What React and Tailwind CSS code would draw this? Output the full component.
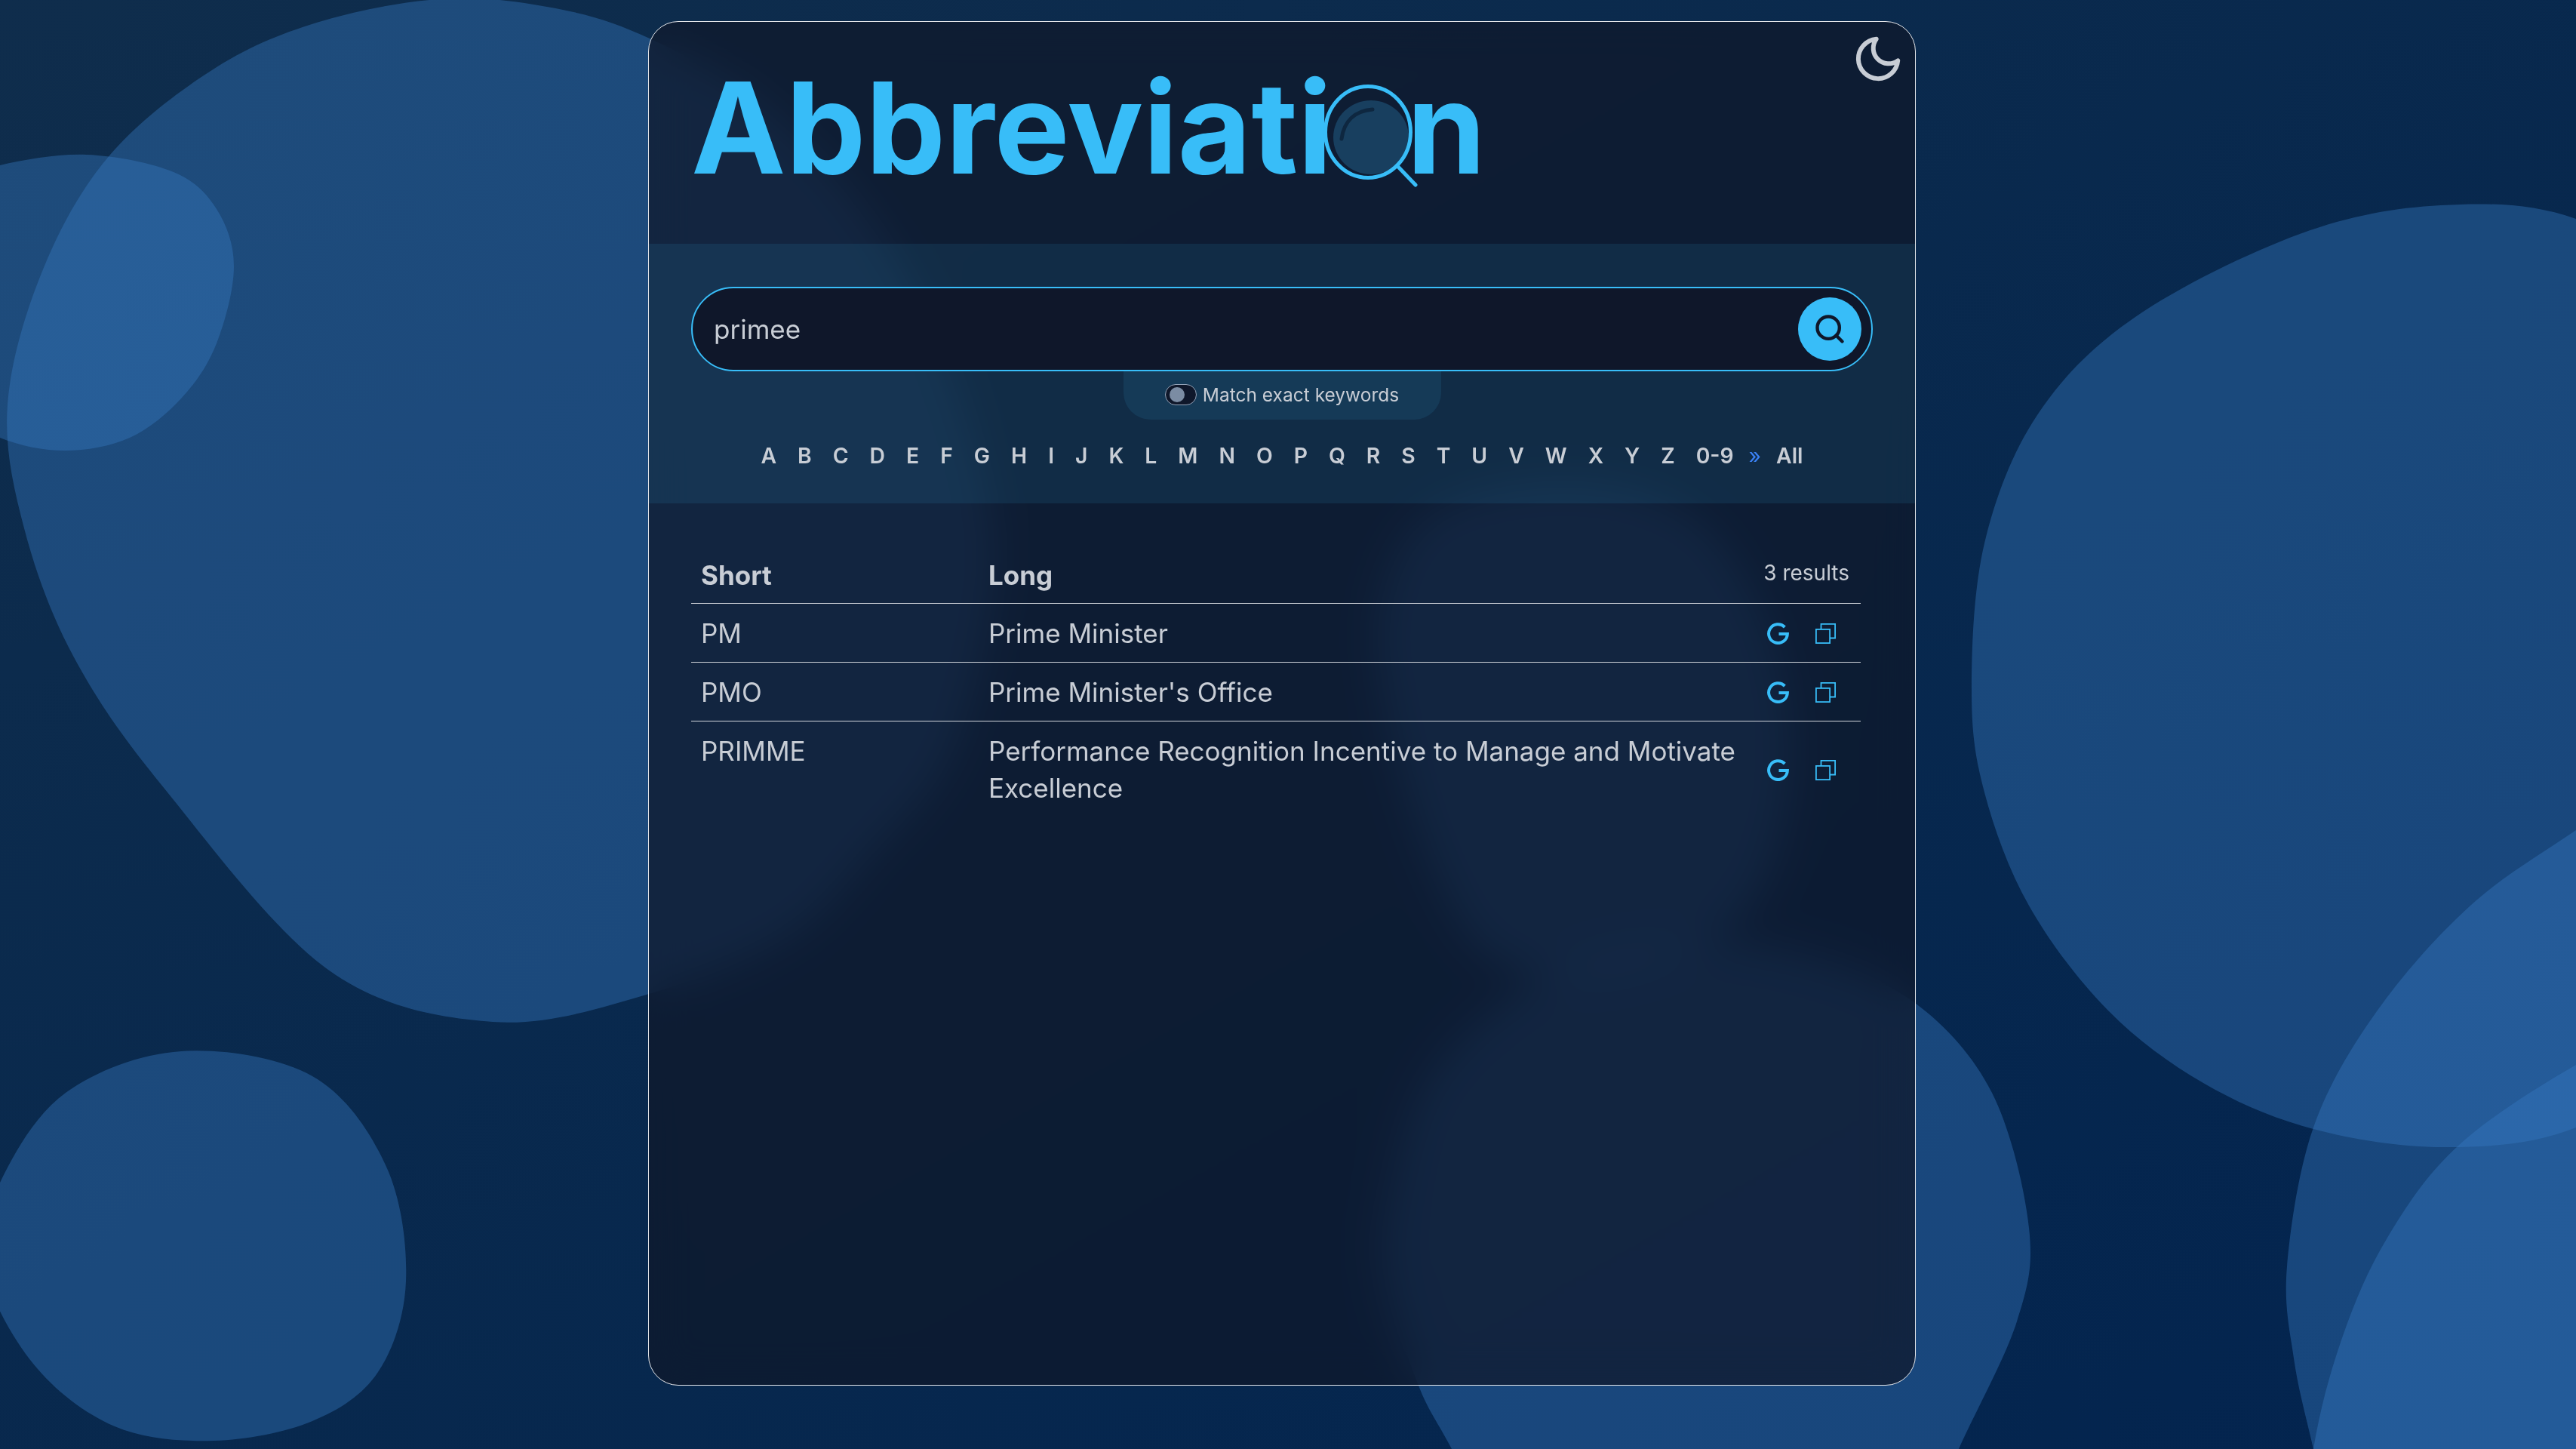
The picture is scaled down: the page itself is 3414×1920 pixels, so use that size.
import { Search } from 'lucide-react';

// smooth closed outline through the given points (Catmull-Rom to bezier)
function blobPath(pts) {
  const n = pts.length;
  let d = `M${pts[0][0]} ${pts[0][1]}`;
  for (let i = 0; i < n; i++) {
    const p0 = pts[(i - 1 + n) % n];
    const p1 = pts[i];
    const p2 = pts[(i + 1) % n];
    const p3 = pts[(i + 2) % n];
    const c1x = p1[0] + (p2[0] - p0[0]) / 6;
    const c1y = p1[1] + (p2[1] - p0[1]) / 6;
    const c2x = p2[0] - (p3[0] - p1[0]) / 6;
    const c2y = p2[1] - (p3[1] - p1[1]) / 6;
    d += `C${c1x} ${c1y} ${c2x} ${c2y} ${p2[0]} ${p2[1]}`;
  }
  return d + 'Z';
}

const blobs = [
  [[597, -2], [746, 13], [861, 51], [1000, 130], [1130, 260], [1230, 420], [1300, 620], [1315, 780], [1260, 1000], [1154, 1132], [1045, 1240], [860, 1317], [653, 1354], [435, 1285], [218, 1045], [98, 871], [32, 700], [10, 536], [57, 357], [146, 205], [287, 89], [430, 27]],
  [[-80, 250], [0, 219], [115, 205], [230, 228], [287, 277], [310, 353], [287, 455], [241, 527], [172, 580], [86, 597], [0, 580], [-80, 530]],
  [[240, 1393], [414, 1426], [512, 1546], [538, 1698], [501, 1818], [414, 1883], [283, 1909], [152, 1890], [44, 1807], [-22, 1676], [0, 1567], [87, 1448]],
  [[2613, 914], [2630, 1050], [2689, 1200], [2793, 1338], [2920, 1435], [3066, 1496], [3241, 1520], [3414, 1494], [3600, 1380], [3650, 900], [3600, 400], [3414, 290], [3235, 272], [3048, 310], [2830, 420], [2700, 550], [2630, 720]],
  [[3550, 1010], [3414, 1100], [3274, 1200], [3150, 1340], [3066, 1494], [3031, 1678], [3040, 1800], [3066, 1920], [3110, 2100], [3600, 2100], [3700, 900]],
  [[3414, 1411], [3257, 1519], [3164, 1640], [3105, 1770], [3066, 1920], [3050, 2100], [3600, 2100], [3600, 1320]],
  [[1990, 2050], [1924, 1920], [1880, 1836], [1838, 1700], [1840, 1600], [1900, 1420], [2060, 1290], [2250, 1250], [2400, 1270], [2538, 1329], [2640, 1448], [2689, 1627], [2673, 1751], [2596, 1920], [2540, 2050]],
  [[2080, 640], [2250, 690], [2350, 850], [2370, 1050], [2300, 1220], [2120, 1290], [1980, 1270], [1900, 1150], [1840, 950], [1830, 800], [1900, 680]],
];

const letters = ['A', 'B', 'C', 'D', 'E', 'F', 'G', 'H', 'I', 'J', 'K', 'L', 'M', 'N', 'O', 'P', 'Q', 'R', 'S', 'T', 'U', 'V', 'W', 'X', 'Y', 'Z', '0-9'];

const results = [
  { short: 'PM', long: 'Prime Minister' },
  { short: 'PMO', long: "Prime Minister's Office" },
  { short: 'PRIMME', long: 'Performance Recognition Incentive to Manage and Motivate Excellence' },
];

function GoogleIcon() {
  return (
    <svg viewBox="0 0 29 29" className="w-[29px] h-[29px]" fill="none" stroke="#38bdf8" strokeWidth="4">
      <path d="M23.4 6A12.4 12.4 0 1 0 26.9 15H15.5" />
    </svg>
  );
}

function CopyIcon() {
  return (
    <svg viewBox="0 0 27 27" className="w-[27px] h-[27px]" fill="none" stroke="#38bdf8" strokeWidth="1.8">
      <rect x="0.9" y="7.9" width="18.2" height="18.2" />
      <path d="M7.5 7.5V0.9H26.1V19.5H19.5" />
    </svg>
  );
}

function Lens() {
  return (
    <svg viewBox="0 0 130 140" className="w-[130px] h-[140px] shrink-0 self-start mt-[32px] ml-[-14px] mr-[-17px]" fill="none">
      <ellipse cx="66" cy="74" rx="50" ry="49" fill="#183f5f" />
      <ellipse cx="62" cy="67" rx="56.5" ry="60.5" stroke="#38bdf8" strokeWidth="5" />
      <path d="M68 37C45 39 30 52 27 76" stroke="#0e2740" strokeWidth="5" strokeLinecap="round" />
      <path d="M102 113L125 137" stroke="#38bdf8" strokeWidth="5" strokeLinecap="round" />
    </svg>
  );
}

export default function App() {
  return (
    <div className="relative h-[1920px] overflow-hidden bg-linear-to-br from-[#0f2d4c] to-[#03244f] font-['Inter',sans-serif] text-[#c8cdd5]">
      <svg className="absolute inset-0 w-full h-full" viewBox="0 0 3414 1920">
        {blobs.map((b, i) => (
          <path key={i} d={blobPath(b)} fill="#387ac4" fillOpacity="0.4" />
        ))}
      </svg>

      <div className="relative flex justify-center pt-[28px] pr-[16px]">
        <div className="relative w-[1680px] h-[1808px] rounded-[40px] border border-[#e5e7eb] bg-[#0f172a]/72 backdrop-blur-[27px] overflow-hidden">
          <button className="absolute right-[14px] top-[14px] text-[#c8cdd5]">
            <svg viewBox="0 0 24 24" className="w-[70px] h-[70px]" fill="none" stroke="currentColor" strokeWidth="2.05" strokeLinejoin="round">
              <path d="M21 12.79A9 9 0 1 1 11.21 3 7 7 0 0 0 21 12.79z" />
            </svg>
          </button>

          <div className="h-[294px] pl-[56px] pt-[47px]">
            <h1 className="flex text-[168px] leading-[186px] font-bold text-[#38bdf8]">
              <span>Abbreviati</span>
              <Lens />
              <span>n</span>
            </h1>
          </div>

          <div className="h-[344px] bg-[#38bdf8]/10 px-[56px] pt-[57px]">
            <div className="flex items-center justify-between h-[112px] rounded-full border-2 border-[#38bdf8] bg-[#0f172a] pl-[28px] pr-[13px]">
              <span className="text-[35px]">primee</span>
              <button className="flex items-center justify-center w-[84px] h-[84px] rounded-full bg-[#38bdf8] text-[#0f172a]">
                <Search className="w-[44px] h-[44px]" strokeWidth={2.4} />
              </button>
            </div>
            <div className="flex justify-center">
              <div className="flex items-center gap-[8px] h-[64px] w-[421px] justify-center rounded-b-[36px] bg-[#38bdf8]/10 text-[24.5px] pb-[2px]">
                <span className="flex items-center w-[42px] h-[28px] rounded-full border border-[#94a3b8] bg-[#0f172a] pl-[5px]">
                  <span className="w-[20px] h-[20px] rounded-full bg-[#7b8ca3]" />
                </span>
                <span>Match exact keywords</span>
              </div>
            </div>
            <div className="flex items-center justify-center h-[48px] mt-[24px] text-[28.3px] font-semibold gap-[28px]">
              {letters.map((l) => (
                <span key={l}>{l}</span>
              ))}
              <span className="text-[#3b82f6] font-normal -mx-[8px]">»</span>
              <span>All</span>
            </div>
          </div>

          <div className="pl-[56px] pr-[72px] pt-[58px] text-[35px] leading-[49px]">
            <div className="flex items-center h-[75px] border-b border-[#d1d5db] font-bold">
              <div className="w-[380px] pl-[13px]">Short</div>
              <div className="flex-1 pl-[14px]">Long</div>
              <div className="pr-[15px] pb-[6px] text-[28px] font-normal">3 results</div>
            </div>
            {results.map((r, i) => (
              <div key={r.short} className={`flex items-center pt-[15px] pb-[13px] ${i < results.length - 1 ? 'border-b border-[#d1d5db]' : ''}`}>
                <div className="w-[380px] self-start pl-[13px]">{r.short}</div>
                <div className="w-[1025px] pl-[14px]">{r.long}</div>
                <div className="flex items-center gap-[35px] pl-[21px]">
                  <GoogleIcon />
                  <CopyIcon />
                </div>
              </div>
            ))}
          </div>
        </div>
      </div>
    </div>
  );
}
